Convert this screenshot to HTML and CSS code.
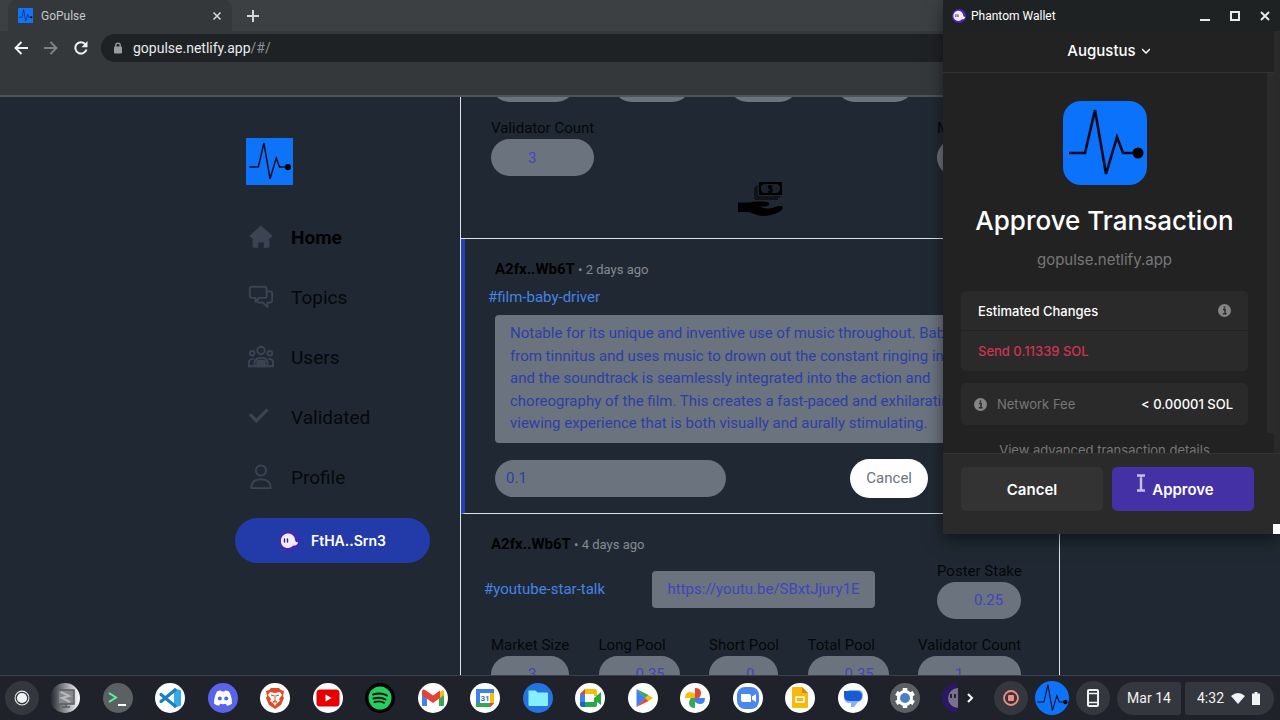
FILE: index.html
```html
<!DOCTYPE html>
<html lang="en">
<head>
    <meta charset="UTF-8">
    <meta name="viewport" content="width=device-width, initial-scale=1.0">
    <title>GoPulse</title>
    <link rel="stylesheet" href="styles.css">
</head>
<body>

<!-- shared icons -->
<svg class="sprite" aria-hidden="true">
    <symbol id="pulse" viewBox="0 0 84 84">
        <path d="M6 52h16L32 9l11 64 11-37 6 16h15" fill="none" stroke="#06091c" stroke-width="2.6"/>
        <circle cx="75" cy="52" r="5.5" fill="#000"/>
    </symbol>
    <symbol id="ghost" viewBox="0 0 20 20">
        <circle cx="10" cy="10" r="10" fill="#4b24b5"/>
        <path d="M2 10.500a7 7 0 0 1 14-2c.4 2.400 1 3 3 2.500-.4 3-3 4-5 3.500-1 1.500-3 2.500-5 2.500-4 0-7-2.500-7-6.500z" fill="#f3ecff"/>
        <path d="M5.500 8v3M8.500 8v3" stroke="#3a2467" stroke-width="1.400" stroke-linecap="round"/>
    </symbol>
    <symbol id="info" viewBox="0 0 14 14">
        <circle cx="7" cy="7" r="7" fill="#858585"/>
        <path d="M7 2.600v2M5.400 6H7.600v4.500M5.200 10.600h4" stroke="#2a2a2a" stroke-width="1.600" fill="none"/>
    </symbol>
</svg>

<header class="browser">
    <div class="tab-strip">
        <div class="tab">
            <svg class="tab-logo" viewBox="0 0 84 84"><use href="#pulse"/></svg>
            <span class="tab-title">GoPulse</span>
            <button class="plain" aria-label="Close tab"><svg width="10" height="10" viewBox="0 0 10 10"><path d="M1.500 1.500l7 7M8.500 1.500l-7 7" stroke="#d5d7d9" stroke-width="1.500"/></svg></button>
        </div>
        <button class="plain new-tab" aria-label="New tab"><svg width="12" height="12" viewBox="0 0 12 12"><path d="M6 0v12M0 6h12" stroke="#d5d7d9" stroke-width="2"/></svg></button>
    </div>
    <div class="toolbar">
        <button class="plain" aria-label="Back"><svg width="14" height="14" viewBox="0 0 14 14"><path d="M7.500 1L1.500 7l6 6M1.500 7H14" fill="none" stroke="#f1f3f4" stroke-width="1.900"/></svg></button>
        <button class="plain" aria-label="Forward"><svg width="14" height="14" viewBox="0 0 14 14"><path d="M6.500 1l6 6-6 6M12.500 7H0" fill="none" stroke="#808386" stroke-width="1.900"/></svg></button>
        <button class="plain" aria-label="Reload"><svg width="14" height="14" viewBox="0 0 14 14"><path d="M11.500 3.300A5.700 5.700 0 1 0 12.500 8.500" fill="none" stroke="#f1f3f4" stroke-width="2"/><path d="M13.500 0v6.200H7.500z" fill="#f1f3f4"/></svg></button>
        <div class="omnibox">
            <svg width="8" height="12" viewBox="0 0 8 12"><path d="M1.800 5V3.300a2.200 2.200 0 0 1 4.400 0V5" fill="none" stroke="#9a9da0" stroke-width="1.300"/><rect y="4.500" width="8" height="7" rx="1" fill="#9a9da0"/></svg>
            <a href="#/">gopulse.netlify.app<span>/#/</span></a>
        </div>
    </div>
    <div class="bookmarks"></div>
</header>

<div class="page">
    <aside class="sidebar">
        <svg class="logo" viewBox="0 0 84 84"><use href="#pulse"/></svg>
        <nav>
            <a class="active" href="#/"><svg viewBox="0 0 28 28"><path d="M14 1.500L1.500 13 3.500 15H5v9q0 1.500 1.500 1.500H11V20h6v5.500h4.500q1.500 0 1.500-1.500v-9h1.500l2-2z" fill="#3b4453"/></svg>Home</a>
            <a href="#/topics"><svg viewBox="0 0 28 28" fill="none" stroke="#3b4453" stroke-width="2" stroke-linejoin="round"><path d="M4 3h14q2 0 2 2v8q0 2-2 2h-6l-4 4v-4H4q-2 0-2-2V5q0-2 2-2z"/><path d="M20 8h4q2 0 2 2v8q0 2-2 2h-3v5l-5-5h-4q-2 0-2-3"/></svg>Topics</a>
            <a href="#/users"><svg viewBox="0 0 28 28" fill="none" stroke="#3b4453" stroke-width="2"><circle cx="14" cy="7" r="4"/><circle cx="4.500" cy="10" r="2.500"/><circle cx="23.500" cy="10" r="2.500"/><path d="M7 24v-4q0-5 7-5t7 5v4zM7 24H1v-4q0-4 5-4M21 24h6v-4q0-4-5-4"/><path d="M10 18h8v6h-8z" fill="#3b4453"/></svg>Users</a>
            <a href="#/validated"><svg viewBox="0 0 28 28"><path d="M2 11l7 7L21 6" fill="none" stroke="#3b4453" stroke-width="3.500"/></svg>Validated</a>
            <a href="#/profile"><svg viewBox="0 0 28 28" fill="none" stroke="#3b4453" stroke-width="2" stroke-linejoin="round"><circle cx="14" cy="7" r="5.500"/><path d="M3.500 26q0-9.500 10.500-9.500T24.500 26z"/></svg>Profile</a>
        </nav>
        <button class="wallet"><svg width="20" height="20"><use href="#ghost"/></svg>FtHA..Srn3</button>
    </aside>

    <main class="feed">
        <article class="card first">
            <div class="stats top">
                <input class="w84" aria-label="Market Size" readonly>
                <input class="w78" aria-label="Long Pool" readonly>
                <input class="w69" aria-label="Short Pool" readonly>
                <input class="w78" aria-label="Total Pool" readonly>
                <input class="w69" aria-label="Poster Stake" readonly>
            </div>
            <div class="stats">
                <label class="w103">Validator Count<input value="3" readonly></label>
                <label class="w84">Market End<input readonly></label>
            </div>
            <button class="plain stake" aria-label="Stake">
                <svg width="46" height="36" viewBox="0 0 46 36">
                    <path d="M18 5v12h23M20 3v12h23" fill="none" stroke="#000" stroke-width="1"/>
                    <rect x="23" y="1" width="21" height="11" fill="#1a222b" stroke="#000" stroke-width="2"/>
                    <path d="M23 1h5l-5 4zM44 1h-5l5 4zM23 12h5l-5-4zM44 12h-5l5-4z"/>
                    <path d="M35.500 4.500q-4-1.500-4 .5t2 1.500 1.500 2.500-4 .2M33.300 3v7.500" fill="none" stroke="#000" stroke-width="1.200"/>
                    <path d="M1 20.500h12q3-1 7-1h6q7 0 6 3-1 2.500-9 2 5 3 12 1.500l7-2q4-.5 4 2-1 4-12 7-7 2-14 0-5-2-8-3H1z"/>
                </svg>
            </button>
        </article>

        <article class="card selected">
            <div class="byline"><b>A2fx..Wb6T</b> • <span>2 days ago</span></div>
            <a class="tag" href="#/topics/film-baby-driver">#film-baby-driver</a>
            <p class="post">Notable for its unique and inventive use of music throughout. Baby suffers from tinnitus and uses music to drown out the constant ringing in his ears, and the soundtrack is seamlessly integrated into the action and choreography of the film. This creates a fast-paced and exhilarating viewing experience that is both visually and aurally stimulating.</p>
            <form class="stake-form">
                <input value="0.1" aria-label="Stake amount">
                <button type="button">Cancel</button>
            </form>
        </article>

        <article class="card">
            <div class="byline"><b>A2fx..Wb6T</b> • <span>4 days ago</span></div>
            <div class="link-row">
                <a class="tag" href="#/topics/youtube-star-talk">#youtube-star-talk</a>
                <a class="link-box" href="#/post">https://youtu.be/SBxtJjury1E</a>
                <div class="stats"><label class="w84">Poster Stake<input value="0.25" readonly></label></div>
            </div>
            <div class="stats">
                <label class="w78">Market Size<input value="3" readonly></label>
                <label class="w81">Long Pool<input value="0.35" readonly></label>
                <label class="w69">Short Pool<input value="0" readonly></label>
                <label class="w81">Total Pool<input value="0.35" readonly></label>
                <label class="w103">Validator Count<input value="1" readonly></label>
            </div>
        </article>
    </main>
</div>

<!-- wallet popup window -->
<section class="popup">
    <div class="popup-title">
        <svg width="14" height="14"><use href="#ghost"/></svg>
        <span>Phantom Wallet</span>
        <button class="plain" aria-label="Minimize"><svg width="10" height="10" viewBox="0 0 10 10"><path d="M0 9h10" stroke="#e8eaed" stroke-width="2"/></svg></button>
        <button class="plain" aria-label="Maximize"><svg width="10" height="10" viewBox="0 0 10 10"><path d="M1 1h8v8H1z" fill="none" stroke="#e8eaed" stroke-width="2"/></svg></button>
        <button class="plain" aria-label="Close"><svg width="10" height="10" viewBox="0 0 10 10"><path d="M1 1l8 8M9 1L1 9" stroke="#e8eaed" stroke-width="1.900"/></svg></button>
    </div>
    <button class="plain account">Augustus<svg width="8" height="6" viewBox="0 0 8 6"><path d="M0 1l4 4 4-4" fill="none" stroke="#fff" stroke-width="1.500"/></svg></button>
    <div class="popup-body">
        <svg class="dapp-logo" viewBox="0 0 84 84"><use href="#pulse"/></svg>
        <h1>Approve Transaction</h1>
        <p class="dapp-url">gopulse.netlify.app</p>
        <div class="changes">
            <div>Estimated Changes<svg width="13" height="13"><use href="#info"/></svg></div>
            <div class="send">Send 0.11339 SOL</div>
        </div>
        <div class="fee"><svg width="13" height="13"><use href="#info"/></svg><span>Network Fee</span>&lt; 0.00001 SOL</div>
        <a class="advanced" href="#/details">View advanced transaction details</a>
        <div class="scrollbar"></div>
    </div>
    <div class="popup-actions">
        <button>Cancel</button>
        <button class="approve">Approve</button>
    </div>
    <svg class="cursor" width="10" height="18" viewBox="0 0 10 18"><path d="M1 1.500h3l1 1 1-1h3M5 2.500v13M1 16.500h3l1-1 1 1h3" fill="none" stroke="#c5bde8" stroke-width="2.500"/></svg>
    <div class="grip"></div>
</section>

<footer class="shelf">
    <button class="round launcher" aria-label="Launcher"><svg viewBox="0 0 32 32"><circle cx="16" cy="16" r="6.500" fill="none" stroke="#e8eaed"/><circle cx="16" cy="16" r="4.800" fill="#f1f3f4"/></svg></button>
    <div class="apps">
        <svg viewBox="0 0 30 30"><defs><linearGradient id="fade"><stop offset="0" stop-color="#20222b"/><stop offset=".6" stop-color="#a8a9ac"/><stop offset="1" stop-color="#fff"/></linearGradient></defs><circle cx="15" cy="15" r="15" fill="url(#fade)"/><path d="M8 7h16v14H8zM12 24h8M16 21v3" fill="#84868a" stroke="#5b5d61" stroke-width="1.500"/><path d="M11 9l8 4-7 2 8 4" fill="none" stroke="#b9babd" stroke-width="2"/></svg>
        <svg viewBox="0 0 30 30"><circle cx="15" cy="15" r="15" fill="#5b6063"/><path d="M6 10l7 4.500L6 19" fill="none" stroke="#5bf5a0" stroke-width="2"/><path d="M15 22h8" stroke="#fff" stroke-width="2"/></svg>
        <svg viewBox="0 0 30 30"><circle cx="15" cy="15" r="15" fill="#fff"/><path d="M19 5l7 2.500v15L19 25z" fill="#32a9e8"/><path d="M6 11.500L20 23M6 18.500L20 7" stroke="#1680c2" stroke-width="3.200" stroke-linecap="round"/></svg>
        <svg viewBox="0 0 30 30"><circle cx="15" cy="15" r="15" fill="#5865e8"/><path d="M9 8.500q2-1 4-1l.6 1h2.800l.6-1q2 0 4 1 3 5 3 12-2 2-5 2.300l-1.200-2q-2.800.8-5.600 0L11 22.800q-3-.3-5-2.300 0-7 3-12z" fill="#fff"/><circle cx="11.800" cy="15.500" r="2" fill="#5865e8"/><circle cx="18.200" cy="15.500" r="2" fill="#5865e8"/></svg>
        <svg viewBox="0 0 30 30"><circle cx="15" cy="15" r="15" fill="#fff"/><path d="M11 5h8l2 2 3 1-1 5 1 2-3 7-6 4-6-4-3-7 1-2-1-5 3-1z" fill="#e24a24"/><path d="M10 9l5 1 5-1 2 3-3 4 1 2-3 2-2 3-2-3-3-2 1-2-3-4z" fill="#fff"/><path d="M11 12l3 1M19 12l-3 1M15 12v6l-2 1h4l-2-1" stroke="#e24a24" fill="none"/></svg>
        <svg viewBox="0 0 30 30"><circle cx="15" cy="15" r="15" fill="#fff"/><rect x="3.500" y="6.500" width="23" height="17" rx="3.500" fill="#e60000"/><path d="M12.500 11.500v7l6-3.500z" fill="#fff"/></svg>
        <svg viewBox="0 0 30 30"><circle cx="15" cy="15" r="15" fill="#000"/><circle cx="15" cy="15" r="11.500" fill="#25cf5f"/><path d="M8 11.500q8-2.500 14 1M8.500 15.500q7-2 12 1M9.500 19q6-1.500 9.500.8" fill="none" stroke="#07140b" stroke-width="1.900" stroke-linecap="round"/></svg>
        <svg viewBox="0 0 30 30"><circle cx="15" cy="15" r="15" fill="#fff"/><path d="M4 8v14q0 1 1 1h4V12z" fill="#3f82ee"/><path d="M26 8v14q0 1-1 1h-4V12z" fill="#35a853"/><path d="M26 12l-5 4v-5l2-3q3-2 3 1z" fill="#fabb09"/><path d="M4 9q0-4 4-1.500l7 5 7-5V15l-7 5-7-5-4-3z" fill="#e54335"/></svg>
        <svg viewBox="0 0 30 30"><circle cx="15" cy="15" r="15" fill="#fff"/><path d="M6 6h18v18H6z" fill="#3f82ee"/><path d="M20 10h4v10h-4z" fill="#fabb09"/><path d="M6 20h14v4H6z" fill="#35a853"/><path d="M20 20h4l-4 4z" fill="#e54335"/><path d="M24 20.500V24h-3.500z" fill="#fff"/><path d="M10 10h10v10H10z" fill="#fff"/><text x="15" y="18" text-anchor="middle" class="cal-day">31</text></svg>
        <svg viewBox="0 0 30 30"><circle cx="15" cy="15" r="15" fill="#2274e0"/><path d="M5.500 7.500h7l2 2H24q1 0 1 1V22q0 1-1 1H6.500q-1 0-1-1z" fill="#86eefc"/></svg>
        <svg viewBox="0 0 30 30"><circle cx="15" cy="15" r="15" fill="#fff"/><path d="M5 11l5-5h10q2 0 2 2v5h-3v-2h-9z" fill="#fabb09"/><path d="M5 11l5-5v5z" fill="#e54335"/><path d="M5 11h5v8H5z" fill="#3f82ee"/><path d="M5 19h5v5H7q-2 0-2-2z" fill="#1a66d0"/><path d="M10 19h9v-4l7-6v13l-4-3v3q0 2-2 2H10z" fill="#28a946"/></svg>
        <svg viewBox="0 0 30 30"><circle cx="15" cy="15" r="15" fill="#fff"/><path d="M8.500 6v18l9-9z" fill="#3f82ee"/><path d="M8.500 6l9 9 3-3z" fill="#35a853"/><path d="M8.500 24l9-9 3 3z" fill="#e54335"/><path d="M20.500 12l4.500 3-4.500 3-3-3z" fill="#fabb09"/></svg>
        <svg viewBox="0 0 30 30"><circle cx="15" cy="15" r="15" fill="#fff"/><path d="M15 15V5q6 0 6 5 0 3-2 5z" fill="#e54335"/><path d="M15 15h10q0 6-5 6-3 0-5-2z" fill="#3f82ee"/><path d="M15 15v10q-6 0-6-5 0-3 2-5z" fill="#35a853"/><path d="M15 15H5q0-6 5-6 3 0 5 2z" fill="#fabb09"/></svg>
        <svg viewBox="0 0 30 30"><circle cx="15" cy="15" r="15" fill="#fff"/><rect x="4" y="4" width="22" height="22" rx="8" fill="#4a87ef"/><path d="M8 11h8q2 0 2 2v6h-8q-2 0-2-2zM19 13.500l4-2.500v8l-4-2.500z" fill="#fff"/></svg>
        <svg viewBox="0 0 30 30"><circle cx="15" cy="15" r="15" fill="#fff"/><path d="M7 5q0-1 1-1h9l6 6v14q0 1-1 1H8q-1 0-1-1z" fill="#f8b90c"/><path d="M17 4l6 6h-6z" fill="#d98c00"/><path d="M11 14h8v5h-8z" fill="none" stroke="#fff" stroke-width="1.500"/></svg>
        <svg viewBox="0 0 30 30"><circle cx="15" cy="15" r="15" fill="#fff"/><path d="M11 7h9q5 0 5 5t-4 7h-1l-4 5h-3v-4h-3q-4-1-4-7z" fill="#8bb0f8"/><path d="M6 8h13q5 0 5 5t-5 5h-7q-6 0-6-5z" fill="#195bd2"/></svg>
        <svg viewBox="0 0 30 30"><circle cx="15" cy="15" r="15" fill="#5d6063"/><circle cx="15" cy="15" r="8" fill="#fff"/><path d="M15 5v20M6.300 10l17.400 10M6.300 20l17.400-10" stroke="#fff" stroke-width="4.500"/><circle cx="15" cy="15" r="5" fill="#4c7fc4"/></svg>
    </div>
    <svg class="peek" viewBox="0 0 16 30"><path d="M15 0A15 15 0 0 0 15 30z" fill="#2c1767"/><path d="M16 5A10 10 0 0 0 16 25z" fill="#77718a"/><path d="M9 11v4M13 11v4" stroke="#252033" stroke-width="2"/></svg>
    <button class="plain more" aria-label="More apps"><svg width="7" height="10" viewBox="0 0 7 10"><path d="M1 1l4 4-4 4" fill="none" stroke="#fff" stroke-width="2"/></svg></button>
    <button class="round" aria-label="Stop recording"><svg viewBox="0 0 34 34"><circle cx="17" cy="17" r="7" fill="none" stroke="#f28b82" stroke-width="1.800"/><rect x="14" y="14" width="6" height="6" rx="1" fill="#f28b82"/></svg></button>
    <button class="round pulse-app" aria-label="GoPulse"><svg viewBox="0 0 84 84"><use href="#pulse"/></svg></button>
    <button class="round" aria-label="Phone Hub"><svg viewBox="0 0 34 34"><rect x="12" y="9" width="10" height="16" rx="1" fill="none" stroke="#f1f3f4" stroke-width="2"/><path d="M12 12.500h10M12 21.500h10" stroke="#f1f3f4" stroke-width="1.500"/></svg></button>
    <button class="tray date">Mar 14</button>
    <button class="tray time">4:32
        <svg width="14" height="11" viewBox="0 0 14 11"><path d="M0 3q7-6 14 0L7 11z" fill="#f1f3f4"/></svg>
        <svg width="8" height="13" viewBox="0 0 8 13"><path d="M2.500 0h3v1.500H8V13H0V1.500h2.500z" fill="#f1f3f4"/></svg>
    </button>
</footer>

</body>
</html>
```
FILE: styles.css
```css
* {
    box-sizing: border-box;
}
body {
    margin: 0;
    height: 100vh;
    display: flex;
    flex-direction: column;
    overflow: hidden;
    position: relative;
    font-family: Roboto, sans-serif;
    font-size: 15px;
    background-color: #202933;
}
button, input {
    font: inherit;
    border: none;
    margin: 0;
}
button {
    cursor: pointer;
}
a {
    text-decoration: none;
}
svg {
    display: block;
    flex-shrink: 0;
}
.sprite {
    position: absolute;
    width: 0;
    height: 0;
}
.plain {
    padding: 0;
    background: none;
    display: flex;
    align-items: center;
}

/* browser */
.browser {
    background-color: #35383b;
    border-bottom: 2px solid #505457;
}
.tab-strip {
    display: flex;
    align-items: center;
    height: 31px;
    padding-left: 8px;
    background-color: #3c4043;
}
.tab {
    display: flex;
    align-items: center;
    align-self: stretch;
    width: 224px;
    padding: 0 10px;
    gap: 8px;
    border-radius: 8px 8px 0 0;
    background-color: #35383b;
}
.tab-logo {
    width: 15px;
    height: 15px;
    background-color: #1273f5;
}
.tab-title {
    flex: 1;
    font-size: 12px;
    color: #c4c7ca;
}
.new-tab {
    margin-left: 15px;
}
.toolbar {
    display: flex;
    align-items: center;
    gap: 16px;
    height: 33px;
    padding-left: 14px;
}
.omnibox {
    flex: 1;
    display: flex;
    align-items: center;
    gap: 11px;
    height: 28px;
    margin-left: -3px;
    padding-left: 13px;
    border-radius: 14px 0 0 14px;
    background-color: #1f2224;
    font-size: 14px;
}
.omnibox a {
    color: #e8eaed;
}
.omnibox span {
    color: #8d9194;
}
.bookmarks {
    height: 31px;
}

/* page */
.page {
    flex: 1;
    min-height: 0;
    overflow: hidden;
    display: grid;
    grid-template-columns: 23fr 600px 11fr;
}
.sidebar {
    justify-self: end;
    width: 225px;
    padding: 41px 30px 0 0;
}
.logo {
    width: 47px;
    height: 47px;
    margin-left: 11px;
    background-color: #0d74fa;
}
.sidebar nav {
    padding: 22px 0 11px 13px;
}
.sidebar nav a {
    display: flex;
    align-items: center;
    gap: 17px;
    height: 60px;
    font-size: 19px;
    color: #05080c;
}
.sidebar nav svg {
    width: 26px;
    height: 26px;
}
.sidebar nav .active {
    font-weight: bold;
    color: #000;
}
.wallet {
    display: flex;
    align-items: center;
    justify-content: center;
    gap: 12px;
    width: 100%;
    height: 45px;
    border-radius: 23px;
    background-color: #233ba8;
    color: #fff;
    font-family: Inter, sans-serif;
    font-size: 14px;
    font-weight: 600;
}
.feed {
    border-left: 1px solid #dce3ea;
    border-right: 1px solid #dce3ea;
}
.card {
    padding: 20px 38px 15px 30px;
    border-bottom: 1px solid #dce3ea;
}
.card.first {
    margin-top: -32px;
    padding-top: 0;
    padding-bottom: 20px;
}
.card.selected {
    border-left: 4px solid #2440b4;
}
.stats {
    display: flex;
    justify-content: space-between;
    color: #04070a;
}
.stats.top {
    margin-bottom: 15px;
}
.stats label {
    display: block;
    line-height: 22px;
    white-space: nowrap;
}
.stats input {
    display: block;
    height: 37px;
    padding: 0 0 0 37px;
    border-radius: 19px;
    background-color: #6b737f;
    color: #3d46bb;
}
.stats label input {
    width: 100%;
}
.w69 {
    width: 69px;
}
.w78 {
    width: 78px;
}
.w81 {
    width: 81px;
}
.w84 {
    width: 84px;
}
.w103 {
    width: 103px;
}
.stake {
    margin: 6px auto 0;
    padding-left: 8px;
}
.byline {
    line-height: 20px;
    font-size: 13px;
    color: #858b92;
}
.byline b {
    font-size: 15px;
    color: #000;
}
.tag {
    display: block;
    margin: 0 -15px 0 -7px;
    line-height: 22px;
    color: #4583e6;
}
.selected .tag {
    margin-top: 6px;
}
.post {
    margin: 7px 0 16px;
    padding: 7px 15px 8px;
    border-radius: 4px;
    background-color: #6b737f;
    color: #2d3fa5;
    line-height: 1.5;
}
.stake-form {
    display: flex;
    align-items: center;
    justify-content: space-between;
    padding-right: 93px;
}
.stake-form input {
    width: 231px;
    height: 37px;
    padding: 0 11px;
    border-radius: 19px;
    background-color: #6b737f;
    color: #2d3fa5;
}
.stake-form button {
    height: 39px;
    padding: 0 16px;
    border-radius: 20px;
    background-color: #fff;
    color: #6b7280;
}
.link-row {
    display: flex;
    align-items: center;
    justify-content: space-between;
    margin: 5px 0 15px;
}
.link-box {
    padding: 0 15px;
    border-radius: 4px;
    background-color: #6b737f;
    color: #3d46bb;
    line-height: 37px;
}

/* popup */
.popup {
    position: absolute;
    top: 0;
    right: 0;
    width: 337px;
    background-color: #2a2a2a;
    color: #fff;
    font-family: Inter, sans-serif;
    font-size: 13px;
    font-weight: 500;
    box-shadow: 0 6px 16px rgba(0, 0, 0, 0.5);
}
.popup-title {
    display: flex;
    align-items: center;
    gap: 20px;
    height: 31px;
    padding: 0 10px 0 9px;
    background-color: #1f2223;
    font-family: Roboto, sans-serif;
    font-size: 12px;
    font-weight: normal;
}
.popup-title span {
    flex: 1;
    margin-left: -15px;
}
.account {
    justify-content: center;
    gap: 6px;
    width: 331px;
    height: 42px;
    padding-bottom: 2px;
    border-bottom: 1px solid #333;
    background-color: #222;
    color: #fff;
    font-size: 15px;
    font-weight: 500;
}
.popup-body {
    position: relative;
    display: flex;
    flex-direction: column;
    width: 331px;
    height: 380px;
    padding: 28px 26px 0 18px;
    overflow: hidden;
    background-color: #222;
}
.dapp-logo {
    align-self: center;
    width: 84px;
    height: 84px;
    border-radius: 18px;
    background-color: #0a72fb;
}
.popup h1 {
    margin: 17px 0 0;
    text-align: center;
    white-space: nowrap;
    font-size: 26px;
    line-height: 38px;
    font-weight: 500;
}
.dapp-url {
    margin: 10px 0 21px;
    text-align: center;
    font-size: 15px;
    line-height: 20px;
    font-weight: normal;
    color: #777;
}
.changes, .fee {
    flex-shrink: 0;
    margin-bottom: 12px;
    border-radius: 5px;
    background-color: #2a2a2a;
}
.changes div {
    display: flex;
    align-items: center;
    justify-content: space-between;
    height: 39px;
    padding: 0 17px;
}
.changes .send {
    height: 41px;
    border-top: 1px solid #222;
    color: #d03450;
}
.fee {
    display: flex;
    align-items: center;
    gap: 10px;
    height: 42px;
    padding: 0 15px 0 13px;
}
.fee span {
    flex: 1;
    font-weight: normal;
    color: #777;
}
.advanced {
    margin-top: 3px;
    text-align: center;
    line-height: 20px;
    font-weight: normal;
    color: #777;
}
.scrollbar {
    position: absolute;
    top: 0;
    right: 0;
    width: 7px;
    height: 360px;
    background-color: #2b2b2b;
}
.popup-actions {
    display: flex;
    gap: 9px;
    padding: 13px 26px 23px 18px;
    border-top: 1px solid #333;
}
.popup-actions button {
    flex: 1;
    height: 44px;
    border-radius: 5px;
    background-color: #333;
    color: #fff;
    font-size: 15px;
    font-weight: 600;
}
.popup-actions .approve {
    background-color: #4331a5;
}
.cursor {
    position: absolute;
    left: 193px;
    top: 474px;
}
.grip {
    position: absolute;
    right: 0;
    bottom: 0;
    width: 7px;
    height: 10px;
    background-color: #fff;
}

/* shelf */
.shelf {
    display: flex;
    align-items: center;
    height: 45px;
    padding: 0 6px 0 5px;
    border-top: 1px solid #3a434b;
    background-color: #20222b;
}
.apps {
    flex: 1;
    display: flex;
    justify-content: space-between;
    margin: 0 22px 0 4px;
}
.apps svg {
    width: 30px;
    height: 30px;
}
.cal-day {
    font-family: Roboto, sans-serif;
    font-size: 8px;
    font-weight: bold;
    fill: #3f72c8;
}
.peek {
    width: 16px;
    height: 30px;
}
.more {
    margin: 0 20px 0 9px;
}
.round {
    width: 34px;
    height: 34px;
    margin-right: 7px;
    padding: 0;
    border-radius: 50%;
    background-color: #35373f;
}
.pulse-app {
    background-color: #0d74fa;
}
.tray {
    height: 33px;
    background-color: #35373f;
    color: #f1f3f4;
    font-size: 14px;
}
.date {
    width: 64px;
    padding: 0;
    border-radius: 17px 3px 3px 17px;
}
.time {
    display: flex;
    align-items: center;
    gap: 7px;
    width: 89px;
    margin-left: 4px;
    padding: 0 12px;
    border-radius: 3px 17px 17px 3px;
}
```
